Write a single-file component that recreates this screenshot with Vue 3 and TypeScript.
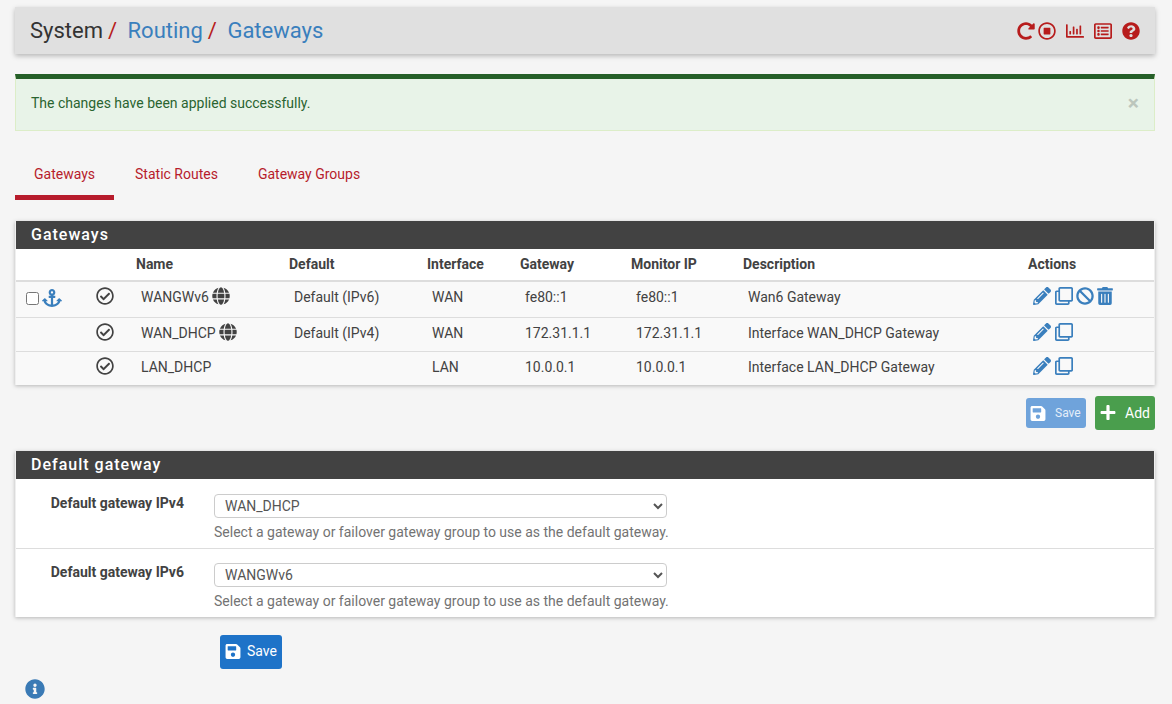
<template>
  <div class="page">
    <header class="crumbs">
      <h1 class="trail">
        <span>System</span><i class="sep">/</i>
        <a>Routing</a><i class="sep">/</i>
        <a>Gateways</a>
      </h1>
      <div class="shortcuts">
        <svg class="sc sc-redo" viewBox="0 0 512 512"><path :d="icons.redo" /></svg>
        <svg class="sc sc-stop" viewBox="0 0 512 512"><path :d="icons.stop" /></svg>
        <svg class="sc sc-chart" viewBox="0 0 512 512"><path :d="icons.chart" /></svg>
        <svg class="sc sc-list" viewBox="0 0 512 512"><path :d="icons.list" /></svg>
        <svg class="sc" viewBox="0 0 512 512"><path :d="icons.help" /></svg>
      </div>
    </header>

    <div class="alert">
      <span>The changes have been applied successfully.</span>
      <span class="close">×</span>
    </div>

    <nav class="tabs">
      <a v-for="tab in tabs" :key="tab" class="tab" :class="{ active: tab === 'Gateways' }">{{ tab }}</a>
    </nav>

    <section class="panel">
      <h2 class="panel-title">Gateways</h2>
      <table class="gw-table">
        <colgroup>
          <col class="c-a" /><col class="c-b" /><col class="c-name" /><col class="c-def" />
          <col class="c-if" /><col class="c-gw" /><col class="c-mon" /><col class="c-desc" /><col class="c-act" />
        </colgroup>
        <thead>
          <tr>
            <th></th><th></th>
            <th v-for="h in headers" :key="h">{{ h }}</th>
          </tr>
        </thead>
        <tbody>
          <tr v-for="row in rows" :key="row.name">
            <td class="pick">
              <div v-if="row.anchor" class="pick-inner">
                <input type="checkbox" class="check" />
                <svg class="ico anchor" viewBox="0 0 576 512"><path :d="icons.anchor" /></svg>
              </div>
            </td>
            <td class="state"><svg class="ico ok" viewBox="0 0 512 512"><path :d="icons.ok" /></svg></td>
            <td>
              {{ row.name }}
              <svg v-if="row.globe" class="ico globe" viewBox="0 0 496 512"><path :d="icons.globe" /></svg>
            </td>
            <td>{{ row.def }}</td>
            <td>{{ row.iface }}</td>
            <td>{{ row.gateway }}</td>
            <td>{{ row.monitor }}</td>
            <td>{{ row.desc }}</td>
            <td class="acts">
              <svg class="ico pencil" viewBox="0 0 512 512"><path :d="icons.pencil" /></svg>
              <svg class="ico clone" viewBox="0 0 512 512"><path :d="icons.clone" /></svg>
              <template v-if="row.anchor">
                <svg class="ico ban" viewBox="0 0 512 512"><path :d="icons.ban" /></svg>
                <svg class="ico trash" viewBox="0 0 448 512"><path :d="icons.trash" /></svg>
              </template>
            </td>
          </tr>
        </tbody>
      </table>
    </section>

    <div class="table-btns">
      <button class="btn btn-faded">
        <svg viewBox="0 0 448 512"><path :d="icons.save" /></svg>Save
      </button>
      <button class="btn btn-add">
        <svg viewBox="0 0 448 512"><path :d="icons.plus" /></svg>Add
      </button>
    </div>

    <section class="panel panel-form">
      <h2 class="panel-title">Default gateway</h2>
      <div v-for="f in fields" :key="f.label" class="field">
        <label class="field-label">{{ f.label }}</label>
        <div class="field-body">
          <select class="select">
            <option v-for="o in options" :key="o" :selected="o === f.value">{{ o }}</option>
          </select>
          <p class="help">Select a gateway or failover gateway group to use as the default gateway.</p>
        </div>
      </div>
    </section>

    <div class="form-btns">
      <button class="btn btn-save">
        <svg viewBox="0 0 448 512"><path :d="icons.save" /></svg>Save
      </button>
    </div>

    <svg class="info" viewBox="0 0 512 512"><path :d="icons.info" /></svg>
  </div>
</template>

<script setup lang="ts">
interface GatewayRow {
  name: string;
  globe: boolean;
  anchor: boolean;
  def: string;
  iface: string;
  gateway: string;
  monitor: string;
  desc: string;
}

const tabs = ['Gateways', 'Static Routes', 'Gateway Groups'];
const headers = ['Name', 'Default', 'Interface', 'Gateway', 'Monitor IP', 'Description', 'Actions'];

const rows: GatewayRow[] = [
  { name: 'WANGWv6', globe: true, anchor: true, def: 'Default (IPv6)', iface: 'WAN', gateway: 'fe80::1', monitor: 'fe80::1', desc: 'Wan6 Gateway' },
  { name: 'WAN_DHCP', globe: true, anchor: false, def: 'Default (IPv4)', iface: 'WAN', gateway: '172.31.1.1', monitor: '172.31.1.1', desc: 'Interface WAN_DHCP Gateway' },
  { name: 'LAN_DHCP', globe: false, anchor: false, def: '', iface: 'LAN', gateway: '10.0.0.1', monitor: '10.0.0.1', desc: 'Interface LAN_DHCP Gateway' },
];

const options = ['WAN_DHCP', 'WANGWv6', 'LAN_DHCP'];
const fields = [
  { label: 'Default gateway IPv4', value: 'WAN_DHCP' },
  { label: 'Default gateway IPv6', value: 'WANGWv6' },
];

const icons = {
  redo: 'M256.455 8c66.269.119 126.437 26.233 170.859 68.685l35.715-35.715C478.149 25.851 504 36.559 504 57.941V192c0 13.255-10.745 24-24 24H345.941c-21.382 0-32.09-25.851-16.971-40.971l41.75-41.75c-30.864-28.899-70.801-44.907-113.23-45.273-92.398-.798-170.283 73.977-169.484 169.442C88.764 348.009 162.184 424 256 424c41.127 0 79.997-14.678 110.629-41.556 4.743-4.161 11.906-3.908 16.368.553l39.662 39.662c4.872 4.872 4.631 12.815-.482 17.433C378.202 479.813 319.926 504 256 504 119.034 504 8.001 392.967 8 256.002 7.999 119.193 119.646 7.755 256.455 8z',
  stop: 'M504 256C504 119 393 8 256 8S8 119 8 256s111 248 248 248 248-111 248-248zm-448 0c0-110.5 89.5-200 200-200s200 89.5 200 200-89.5 200-200 200S56 366.5 56 256zm296-80v160c0 8.8-7.2 16-16 16H176c-8.8 0-16-7.2-16-16V176c0-8.8 7.2-16 16-16h160c8.8 0 16 7.2 16 16z',
  chart: 'M396.8 352h22.4c6.4 0 12.8-6.4 12.8-12.8V108.8c0-6.4-6.4-12.8-12.8-12.8h-22.4c-6.4 0-12.8 6.4-12.8 12.8v230.4c0 6.4 6.4 12.8 12.8 12.8zm-192 0h22.4c6.4 0 12.8-6.4 12.8-12.8V140.8c0-6.4-6.4-12.8-12.8-12.8h-22.4c-6.4 0-12.8 6.4-12.8 12.8v198.4c0 6.4 6.4 12.8 12.8 12.8zm96 0h22.4c6.4 0 12.8-6.4 12.8-12.8V204.8c0-6.4-6.4-12.8-12.8-12.8h-22.4c-6.4 0-12.8 6.4-12.8 12.8v134.4c0 6.4 6.4 12.8 12.8 12.8zM496 400H48V80c0-8.84-7.16-16-16-16H16C7.16 64 0 71.16 0 80v336c0 17.67 14.33 32 32 32h464c8.84 0 16-7.16 16-16v-16c0-8.84-7.16-16-16-16zm-387.2-48h22.4c6.4 0 12.8-6.4 12.8-12.8v-70.4c0-6.4-6.4-12.8-12.8-12.8h-22.4c-6.4 0-12.8 6.4-12.8 12.8v70.4c0 6.4 6.4 12.8 12.8 12.8z',
  list: 'M464 32H48C21.49 32 0 53.49 0 80v352c0 26.51 21.49 48 48 48h416c26.51 0 48-21.49 48-48V80c0-26.51-21.49-48-48-48zm-6 400H54a6 6 0 0 1-6-6V86a6 6 0 0 1 6-6h404a6 6 0 0 1 6 6v340a6 6 0 0 1-6 6zm-42-92v24c0 6.627-5.373 12-12 12H204c-6.627 0-12-5.373-12-12v-24c0-6.627 5.373-12 12-12h200c6.627 0 12 5.373 12 12zm0-96v24c0 6.627-5.373 12-12 12H204c-6.627 0-12-5.373-12-12v-24c0-6.627 5.373-12 12-12h200c6.627 0 12 5.373 12 12zm0-96v24c0 6.627-5.373 12-12 12H204c-6.627 0-12-5.373-12-12v-24c0-6.627 5.373-12 12-12h200c6.627 0 12 5.373 12 12zm-252 12c0 19.882-16.118 36-36 36s-36-16.118-36-36 16.118-36 36-36 36 16.118 36 36zm0 96c0 19.882-16.118 36-36 36s-36-16.118-36-36 16.118-36 36-36 36 16.118 36 36zm0 96c0 19.882-16.118 36-36 36s-36-16.118-36-36 16.118-36 36-36 36 16.118 36 36z',
  help: 'M504 256c0 136.997-111.043 248-248 248S8 392.997 8 256C8 119.083 119.043 8 256 8s248 111.083 248 248zM262.655 90c-54.497 0-89.255 22.957-116.549 63.758-3.536 5.286-2.353 12.415 2.715 16.258l34.699 26.31c5.205 3.947 12.621 3.008 16.665-2.122 17.864-22.658 30.113-35.797 57.303-35.797 20.429 0 45.698 13.148 45.698 32.958 0 14.976-12.363 22.667-32.534 33.976C247.128 238.528 216 254.941 216 296v4c0 6.627 5.373 12 12 12h56c6.627 0 12-5.373 12-12v-1.333c0-28.462 83.186-29.647 83.186-106.667 0-58.002-60.165-102-116.531-102zM256 338c-25.365 0-46 20.635-46 46 0 25.364 20.635 46 46 46s46-20.636 46-46c0-25.365-20.635-46-46-46z',
  anchor: 'M12.971 352h32.394C67.172 454.735 181.944 512 288 512c106.229 0 220.853-57.38 242.635-160h32.394c10.691 0 16.045-12.926 8.485-20.485l-67.029-67.029c-4.686-4.686-12.284-4.686-16.971 0l-67.029 67.029c-7.56 7.56-2.206 20.485 8.485 20.485h35.146c-20.29 54.317-84.963 86.588-144.117 94.015V256h52c6.627 0 12-5.373 12-12v-40c0-6.627-5.373-12-12-12h-52v-5.47c37.281-13.178 63.995-48.725 64-90.518C384.005 43.772 341.605.738 289.37.01 235.723-.739 192 42.525 192 96c0 41.798 26.716 77.35 64 90.53V192h-52c-6.627 0-12 5.373-12 12v40c0 6.627 5.373 12 12 12h52v190.015c-58.936-7.399-123.82-39.679-144.117-94.015h35.146c10.691 0 16.045-12.926 8.485-20.485l-67.029-67.029c-4.686-4.686-12.284-4.686-16.971 0L4.485 331.515C-3.074 339.074 2.28 352 12.971 352zM288 64c17.645 0 32 14.355 32 32s-14.355 32-32 32-32-14.355-32-32 14.355-32 32-32z',
  ok: 'M256 8C119.033 8 8 119.033 8 256s111.033 248 248 248 248-111.033 248-248S392.967 8 256 8zm0 48c110.532 0 200 89.451 200 200 0 110.532-89.451 200-200 200-110.532 0-200-89.451-200-200 0-110.532 89.451-200 200-200m140.204 130.267l-22.536-22.718c-4.667-4.705-12.265-4.736-16.97-.068L215.346 303.697l-59.792-60.277c-4.667-4.705-12.265-4.736-16.97-.069l-22.719 22.536c-4.705 4.667-4.736 12.265-.068 16.971l90.781 91.516c4.667 4.705 12.265 4.736 16.97.068l172.589-171.204c4.704-4.668 4.734-12.266.067-16.971z',
  globe: 'M336.5 160C322 70.7 287.8 8 248 8s-74 62.7-88.5 152h177zM152 256c0 22.2 1.2 43.5 3.3 64h185.3c2.1-20.5 3.3-41.8 3.3-64s-1.2-43.5-3.3-64H155.3c-2.1 20.5-3.3 41.8-3.3 64zm324.7-96c-28.6-67.9-86.5-120.4-158-141.6 24.4 33.8 41.2 84.7 50 141.6h108zM177.2 18.4C105.8 39.6 47.8 92.1 19.3 160h108c8.7-56.9 25.5-107.8 49.9-141.6zM487.4 192H372.7c2.1 21 3.3 42.5 3.3 64s-1.2 43-3.3 64h114.6c5.5-20.5 8.6-41.8 8.6-64s-3.1-43.5-8.5-64zM120 256c0-21.5 1.2-43 3.3-64H8.6C3.2 212.5 0 233.8 0 256s3.2 43.5 8.6 64h114.6c-2-21-3.2-42.5-3.2-64zm39.5 96c14.5 89.3 48.7 152 88.5 152s74-62.7 88.5-152h-177zm159.3 141.6c71.4-21.2 129.4-73.7 158-141.6h-108c-8.8 56.9-25.6 107.8-50 141.6zM19.3 352c28.6 67.9 86.5 120.4 158 141.6-24.4-33.8-41.2-84.7-50-141.6h-108z',
  pencil: 'M497.9 142.1l-46.1 46.1c-4.7 4.7-12.3 4.7-17 0l-111-111c-4.7-4.7-4.7-12.3 0-17l46.1-46.1c18.7-18.7 49.1-18.7 67.9 0l60.1 60.1c18.8 18.7 18.8 49.1 0 67.9zM284.2 99.8L21.6 362.4.4 483.9c-2.9 16.4 11.4 30.6 27.8 27.8l121.5-21.3 262.6-262.6c4.7-4.7 4.7-12.3 0-17l-111-111c-4.8-4.7-12.4-4.7-17.1 0zM124.1 339.9c-5.5-5.5-5.5-14.3 0-19.8l154-154c5.5-5.5 14.3-5.5 19.8 0s5.5 14.3 0 19.8l-154 154c-5.5 5.5-14.3 5.5-19.8 0zM88 424h48v36.3l-64.5 11.3-31.1-31.1L51.7 376H88v48z',
  clone: 'M464 0H144c-26.51 0-48 21.49-48 48v48H48c-26.51 0-48 21.49-48 48v320c0 26.51 21.49 48 48 48h320c26.51 0 48-21.49 48-48v-48h48c26.51 0 48-21.49 48-48V48c0-26.51-21.49-48-48-48zM362 464H54a6 6 0 0 1-6-6V150a6 6 0 0 1 6-6h42v224c0 26.51 21.49 48 48 48h224v42a6 6 0 0 1-6 6zm96-96H150a6 6 0 0 1-6-6V54a6 6 0 0 1 6-6h308a6 6 0 0 1 6 6v308a6 6 0 0 1-6 6z',
  ban: 'M256 8C119.034 8 8 119.033 8 256s111.034 248 248 248 248-111.034 248-248S392.967 8 256 8zm130.108 117.892c65.448 65.448 70 165.481 20.677 235.637L150.47 105.216c70.204-49.356 170.226-44.735 235.638 20.676zM125.892 386.108c-65.448-65.448-70-165.481-20.677-235.637L361.53 406.784c-70.203 49.356-170.226 44.736-235.638-20.676z',
  trash: 'M32 464a48 48 0 0 0 48 48h288a48 48 0 0 0 48-48V128H32zm272-256a16 16 0 0 1 32 0v224a16 16 0 0 1-32 0zm-96 0a16 16 0 0 1 32 0v224a16 16 0 0 1-32 0zm-96 0a16 16 0 0 1 32 0v224a16 16 0 0 1-32 0zM432 32H312l-9.4-18.7A24 24 0 0 0 281.1 0H166.8a23.72 23.72 0 0 0-21.4 13.3L136 32H16A16 16 0 0 0 0 48v32a16 16 0 0 0 16 16h416a16 16 0 0 0 16-16V48a16 16 0 0 0-16-16z',
  save: 'M433.941 129.941l-83.882-83.882A48 48 0 0 0 316.118 32H48C21.49 32 0 53.49 0 80v352c0 26.51 21.49 48 48 48h352c26.51 0 48-21.49 48-48V163.882a48 48 0 0 0-14.059-33.941zM224 416c-35.346 0-64-28.654-64-64 0-35.346 28.654-64 64-64s64 28.654 64 64c0 35.346-28.654 64-64 64zm96-304.52V212c0 6.627-5.373 12-12 12H76c-6.627 0-12-5.373-12-12V108c0-6.627 5.373-12 12-12h228.52c3.183 0 6.235 1.264 8.485 3.515l3.48 3.48A11.996 11.996 0 0 1 320 111.48z',
  plus: 'M416 208H272V64c0-17.67-14.33-32-32-32h-32c-17.67 0-32 14.33-32 32v144H32c-17.67 0-32 14.33-32 32v32c0 17.67 14.33 32 32 32h144v144c0 17.67 14.33 32 32 32h32c17.67 0 32-14.33 32-32V304h144c17.67 0 32-14.33 32-32v-32c0-17.67-14.33-32-32-32z',
  info: 'M256 8C119.043 8 8 119.083 8 256c0 136.997 111.043 248 248 248s248-111.003 248-248C504 119.083 392.957 8 256 8zm0 110c23.196 0 42 18.804 42 42s-18.804 42-42 42-42-18.804-42-42 18.804-42 42-42zm56 254c0 6.627-5.373 12-12 12h-88c-6.627 0-12-5.373-12-12v-24c0-6.627 5.373-12 12-12h12v-64h-12c-6.627 0-12-5.373-12-12v-24c0-6.627 5.373-12 12-12h64c6.627 0 12 5.373 12 12v100h12c6.627 0 12 5.373 12 12v24z',
};
</script>

<style>
html,
body {
  background: #f5f5f5;
}
</style>

<style scoped>
.page {
  height: 704px;
  box-sizing: border-box;
  overflow: hidden;
  padding: 7px 17px 0 15px;
  font-family: Roboto, "Liberation Sans", sans-serif;
  font-size: 14px;
  color: #424242;
  background: #f5f5f5;
}

.crumbs {
  display: flex;
  align-items: center;
  justify-content: space-between;
  height: 47px;
  padding: 0 15px;
  background: #e0e0e0;
  box-shadow: 0 2px 5px rgba(0, 0, 0, 0.26);
}
.trail {
  margin: 0;
  font-size: 22px;
  font-weight: 400;
  color: #333;
}
.trail a {
  color: #3a7fbd;
}
.sep {
  margin: 0 10.5px 0 5px;
  color: #b71c1c;
  font-style: normal;
}
.shortcuts {
  display: flex;
  align-items: center;
  gap: 10px;
}
.sc {
  display: block;
  width: 18px;
  height: 18px;
  fill: #b71c1c;
}
.sc-redo {
  margin-right: -7px;
}

.alert {
  display: flex;
  align-items: center;
  justify-content: space-between;
  box-sizing: border-box;
  height: 57px;
  margin-top: 20px;
  padding: 0 15px 3px;
  background: #e8f3e8;
  border: 1px solid #dcedc8;
  border-top: 5px solid #255f28;
  color: #2a6430;
}
.close {
  font-size: 21px;
  font-weight: 700;
  line-height: 1;
  color: #bcc6bd;
}

.tabs {
  display: flex;
  margin-top: 24px;
}
.tab {
  padding: 11px 19px 13px;
  line-height: 16px;
  height: 16px;
  color: #b71c2c;
  border-bottom: 5px solid transparent;
  margin-right: 2px;
}
.tab.active {
  border-bottom-color: #b71c2c;
}

.panel {
  margin-top: 21px;
  background: #fff;
  border: solid #efefef;
  border-width: 0 1px;
  box-shadow: 0 1px 4px rgba(0, 0, 0, 0.26);
}
.panel-title {
  margin: 0;
  height: 28px;
  padding-left: 15px;
  line-height: 28px;
  background: #424242;
  color: #fff;
  font-size: 16px;
  font-weight: 500;
  letter-spacing: 1px;
}

.gw-table {
  width: 100%;
  table-layout: fixed;
  border-collapse: collapse;
}
.c-a { width: 70px; }
.c-b { width: 50px; }
.c-name { width: 153px; }
.c-def { width: 138px; }
.c-if { width: 93px; }
.c-gw { width: 111px; }
.c-mon { width: 112px; }
.c-desc { width: 285px; }
.c-act { width: auto; }
th {
  height: 30px;
  padding: 0 0 1px;
  text-align: left;
  font-weight: 700;
  background: #fff;
  border-bottom: 2px solid #ddd;
}
td {
  box-sizing: border-box;
  height: 34px;
  padding: 5px;
  line-height: 20px;
  vertical-align: top;
  background: #f9f9f9;
  border-bottom: 1px solid #ddd;
}
tbody tr:first-child td {
  height: 36px;
}
tbody tr:last-child td {
  border-bottom: 0;
}
td.pick {
  padding: 0;
}
.pick-inner {
  display: flex;
  align-items: flex-start;
}
.ico {
  display: inline-block;
  vertical-align: top;
}
.check {
  width: 13px;
  height: 13px;
  margin: 10px 0 0 10px;
}
.anchor {
  width: 20px;
  height: 18px;
  margin: 7px 0 0 3px;
  fill: #3a7fbd;
}
td.state {
  padding-left: 10px;
}
.ok {
  display: block;
  width: 18px;
  height: 18px;
  fill: #424242;
}
.globe {
  width: 18px;
  height: 18px;
  fill: #424242;
}
.acts {
  font-size: 0;
}
.acts .ico {
  height: 18px;
  fill: #3a7fbd;
}
.pencil { width: 18px; margin-right: 4px; }
.clone { width: 18px; margin-right: 3px; }
.ban { width: 18px; margin-right: 3px; }
.trash { width: 16px; }

.table-btns {
  display: flex;
  align-items: center;
  justify-content: flex-end;
  gap: 9px;
  margin-top: 11px;
}
.btn {
  display: inline-flex;
  align-items: center;
  box-sizing: border-box;
  border: 0;
  border-radius: 3px;
  color: #fff;
  font-family: inherit;
}
.btn svg {
  fill: #fff;
  height: 17px;
  width: 16px;
}
.btn-faded {
  width: 60px;
  height: 30px;
  padding: 0 4px;
  gap: 9px;
  background: #6fa3db;
  color: #e4eef9;
  font-size: 12px;
}
.btn-add {
  width: 60px;
  height: 34px;
  padding: 0 5px 1px;
  gap: 9px;
  background: #4a9e4d;
  font-size: 14px;
}
.btn-save {
  width: 62px;
  height: 34px;
  padding: 0 5px 2px;
  gap: 6px;
  background: #1e73c8;
  font-size: 14px;
}

.panel-form {
  margin-top: 21px;
}
.field {
  display: flex;
  height: 68px;
  border-bottom: 1px solid #ddd;
}
.panel-title + .field {
  margin-top: 1px;
}
.field:last-child {
  border-bottom: 0;
}
.field-label {
  width: 168px;
  padding-top: 15px;
  text-align: right;
  font-weight: 700;
  color: #424242;
}
.field-body {
  margin-left: 30px;
  padding-top: 14px;
}
.select {
  display: block;
  width: 453px;
  height: 24px;
  padding: 0 6px;
  border: 1px solid #ccc;
  border-radius: 4px;
  background: #fff;
  color: #555;
  font-family: inherit;
  font-size: 14px;
}
.help {
  margin: 6px 0 0;
  color: #737373;
  line-height: 16px;
}

.form-btns {
  display: flex;
  margin-top: 18px;
  padding-left: 205px;
}
.info {
  display: block;
  width: 20px;
  height: 20px;
  margin: 10px 0 0 10px;
  fill: #3a7ab5;
}
</style>
